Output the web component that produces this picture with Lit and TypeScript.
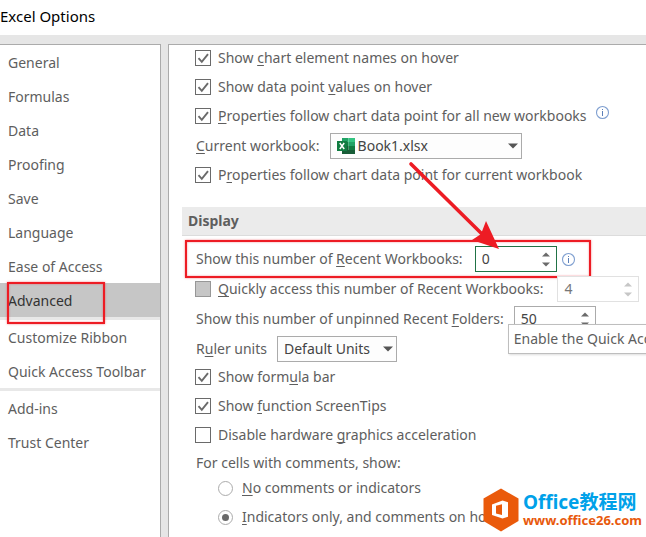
import { LitElement, html, css, svg, nothing, TemplateResult } from "lit";
import { customElement, property } from "lit/decorators.js";
import { classMap } from "lit/directives/class-map.js";

const NAV_GROUPS = [
  ["General", "Formulas", "Data", "Proofing", "Save", "Language", "Ease of Access", "Advanced"],
  ["Customize Ribbon", "Quick Access Toolbar"],
  ["Add-ins", "Trust Center"],
];

/** Renders a label whose access key is marked with "&", as in "&Current". */
function accessLabel(text: string): TemplateResult {
  const at = text.indexOf("&");
  if (at < 0) return html`${text}`;
  return html`${text.slice(0, at)}<u>${text[at + 1]}</u>${text.slice(at + 2)}`;
}

const infoIcon = html`<svg class="info" width="15" height="15" viewBox="0 0 15 15" aria-hidden="true">
  <circle cx="7.5" cy="7.5" r="6" fill="#fff" stroke="#7f9fd0" stroke-width="1.1" />
  <rect x="7" y="6" width="1" height="5" fill="#5b7fb8" />
  <rect x="7" y="4" width="1" height="1" fill="#5b7fb8" />
</svg>`;

const shared = css`
  *,
  *::before {
    box-sizing: border-box;
  }
  u {
    text-decoration-thickness: 1px;
    text-underline-offset: 2px;
    text-decoration-skip-ink: none;
  }
  input,
  select,
  button {
    font: inherit;
    color: inherit;
    margin: 0;
  }
`;

@customElement("option-check")
export class OptionCheck extends LitElement {
  @property() label = "";
  @property() kind: "checkbox" | "radio" = "checkbox";
  @property() name = "";
  @property({ type: Boolean }) checked = false;
  @property({ type: Boolean }) disabled = false;

  static styles = [
    shared,
    css`
      :host {
        display: block;
      }
      .row {
        display: flex;
        align-items: center;
        gap: 7px;
        height: 26px;
        white-space: nowrap;
      }
      .row.radio {
        gap: 9px;
      }
      .box {
        appearance: none;
        flex: none;
        display: grid;
        place-items: center;
        width: 16px;
        height: 16px;
        border: 1px solid #6a6a6a;
        background: #fff;
      }
      .mark {
        grid-area: 1 / 1;
        pointer-events: none;
      }
      .control {
        display: grid;
        place-items: center;
      }
      .control .box {
        grid-area: 1 / 1;
      }
      .box:disabled {
        background: #c6c6c6;
        border-color: #979797;
      }
      .radio .control {
        width: 15px;
        height: 15px;
      }
      .radio .box {
        width: 15px;
        height: 15px;
        border-color: #ababab;
        border-radius: 50%;
      }
    `,
  ];

  render() {
    const radio = this.kind === "radio";
    const mark = radio
      ? html`<svg class="mark" width="15" height="15" viewBox="0 0 15 15" aria-hidden="true">
          <circle cx="7.5" cy="7.5" r="3.5" fill="#6a6a6a" />
        </svg>`
      : html`<svg class="mark" width="16" height="16" viewBox="0 0 16 16" aria-hidden="true">
          <path d="M3.5 8.2 L6.8 11.8 L13 4.2" fill="none" stroke="#6a6a6a" stroke-width="1.9" />
        </svg>`;
    return html`<label class=${classMap({ row: true, radio })}>
      <span class="control">
        <input class="box" type=${this.kind} name=${this.name || nothing} .checked=${this.checked} ?disabled=${this.disabled} />
        ${this.checked ? mark : nothing}
      </span>
      <span>${accessLabel(this.label)}</span>
    </label>`;
  }
}

@customElement("number-spinner")
export class NumberSpinner extends LitElement {
  @property() label = "";
  @property({ type: Number }) value = 0;
  @property({ type: Boolean }) active = false;
  @property({ type: Boolean }) disabled = false;

  static styles = [
    shared,
    css`
      :host {
        display: block;
        flex: none;
      }
      .spin {
        display: flex;
        width: 82px;
        height: 26px;
        border: 1px solid #ababab;
        background: #fff;
        color: #444;
      }
      .spin.active {
        border-color: #217346;
      }
      .spin.disabled {
        border-color: #e1e1e1;
        color: #777;
      }
      .value {
        appearance: textfield;
        flex: 1;
        min-width: 0;
        padding: 0 0 0 6px;
        border: 0;
        outline: 0;
        background: none;
      }
      .value::-webkit-inner-spin-button {
        appearance: none;
      }
      .steps {
        display: flex;
        flex-direction: column;
        justify-content: center;
        gap: 5px;
        width: 14px;
      }
      .step {
        display: block;
        width: 8px;
        height: 5px;
        padding: 0;
        border: 0;
        background: none;
        line-height: 0;
        color: #6a6a6a;
      }
      .disabled .step {
        color: #c6c6c6;
      }
    `,
  ];

  render() {
    return html`<div class=${classMap({ spin: true, active: this.active, disabled: this.disabled })}>
      <input class="value" type="number" aria-label=${this.label} .value=${String(this.value)} ?disabled=${this.disabled} />
      <span class="steps">
        <button class="step" aria-label="Increase" ?disabled=${this.disabled}>
          <svg width="8" height="5" viewBox="0 0 8 5"><path d="M4 0.5 L8 4.5 H0 Z" fill="currentColor" /></svg>
        </button>
        <button class="step" aria-label="Decrease" ?disabled=${this.disabled}>
          <svg width="8" height="5" viewBox="0 0 8 5"><path d="M4 4.5 L8 0.5 H0 Z" fill="currentColor" /></svg>
        </button>
      </span>
    </div>`;
  }
}

@customElement("app-root")
export class AppRoot extends LitElement {
  static styles = [
    shared,
    css`
      :host {
        display: flex;
        flex-direction: column;
        position: relative;
        min-height: 100vh;
        overflow: hidden;
        background: #e6e6e6;
        color: #5e5e5e;
        font: 14px/20px "Noto Sans", "Open Sans", "Noto Sans CJK SC", sans-serif;
        box-sizing: border-box;
      }
      .title {
        margin: 0;
        height: 35px;
        padding-top: 6px;
        background: #fff;
        color: #000;
        font-size: 15px;
        font-weight: 400;
      }
      .body {
        flex: 1;
        display: flex;
        gap: 7px;
        padding-top: 9px;
      }
      .nav {
        flex: none;
        width: 161px;
        border: solid #ababab;
        border-width: 1px 1px 0 0;
        background: #fff;
      }
      .group + .group {
        border-top: 3px solid #fff;
        border-image: linear-gradient(to right, #e8e8e8 157px, #fff 157px) 3;
      }
      .item {
        display: flex;
        align-items: center;
        position: relative;
        height: 34px;
        padding: 1px 0 0 8px;
        color: inherit;
        text-decoration: none;
        white-space: nowrap;
      }
      .item.current {
        background: #c6c6c6;
        color: #333;
      }
      .frame {
        position: absolute;
        border: 2px solid #ed1c24;
        box-shadow: 0 0 2px #ed1c2488, inset 0 0 2px #ed1c2488;
        pointer-events: none;
      }
      .item .frame {
        left: 7px;
        top: -1px;
        width: 98px;
        height: 42px;
        z-index: 1;
      }
      .page {
        flex: 1;
        min-width: 0;
        padding-left: 13px;
        border: solid #ababab;
        border-width: 1px 0 0 1px;
        background: #fff;
      }
      .stack {
        display: flex;
        flex-direction: column;
        gap: 3px;
        padding-left: 13px;
      }
      .fields {
        gap: 4px;
        margin-top: 10px;
      }
      .checks {
        margin-top: 2px;
      }
      .field {
        display: flex;
        align-items: center;
        gap: 10px;
        position: relative;
        height: 26px;
        padding-left: 1px;
        white-space: nowrap;
      }
      .field.recent {
        gap: 12px;
      }
      .field.quick {
        gap: 14px;
        padding-left: 0;
      }
      .chart .field {
        margin-top: 1px;
      }
      .with-info {
        display: flex;
        align-items: flex-start;
        gap: 8px;
      }
      .heading {
        height: 29px;
        margin: 19px 0 0;
        padding: 4px 6px;
        border-bottom: 1px solid #dcdcdc;
        background: #ebebeb;
        font-size: 14px;
        line-height: 20px;
        font-weight: 700;
      }
      .info {
        display: block;
        flex: none;
      }
      .with-info .info {
        margin-top: 2px;
      }
      .spin-info {
        display: flex;
        align-items: center;
        gap: 4px;
      }
      .picker {
        display: grid;
        align-items: center;
      }
      .picker > * {
        grid-area: 1 / 1;
      }
      .select {
        appearance: none;
        height: 26px;
        padding: 0 20px 0 6px;
        border: 1px solid #ababab;
        border-radius: 0;
        background: #fdfdfd;
        color: #444;
      }
      .book {
        width: 192px;
        padding-left: 27px;
      }
      .units {
        width: 120px;
      }
      .arrow-down {
        justify-self: end;
        margin-right: 4px;
        pointer-events: none;
      }
      .excel {
        margin-left: 7px;
        pointer-events: none;
      }
      .target {
        position: relative;
      }
      .pointer {
        position: absolute;
        right: 58px;
        bottom: 22px;
        z-index: 2;
        pointer-events: none;
      }
      .field .frame {
        left: -10px;
        top: -6px;
        width: 406px;
        height: 38px;
      }
      .tip {
        position: absolute;
        left: -6px;
        top: 18px;
        height: 30px;
        padding: 4px 5px;
        border: 1px solid #bebebe;
        background: #fff;
        box-shadow: 1px 1px 2px #0002;
        z-index: 1;
      }
      .caption {
        margin: 0;
        height: 21px;
        padding-left: 1px;
        line-height: 24px;
      }
      .radios {
        padding-left: 23px;
        display: flex;
        flex-direction: column;
        gap: 3px;
      }
      .brand {
        display: flex;
        align-items: center;
        gap: 4px;
        position: absolute;
        right: 4px;
        bottom: 5px;
        text-decoration: none;
        white-space: nowrap;
        font-weight: 700;
      }
      .words {
        display: flex;
        flex-direction: column;
      }
      .name {
        color: #00a1e9;
        font-size: 19px;
        line-height: 20px;
      }
      .site {
        color: #e8590c;
        font-size: 13px;
        line-height: 16px;
      }
    `,
  ];

  private caret = html`<svg class="arrow-down" width="10" height="6" viewBox="0 0 10 6" aria-hidden="true">
    <path d="M0 0.5 H10 L5 5.5 Z" fill="#555" />
  </svg>`;

  private nav() {
    return html`<nav class="nav">
      ${NAV_GROUPS.map(
        (group) => html`<div class="group">
          ${group.map((name) => {
            const current = name === "Advanced";
            return html`<a class=${classMap({ item: true, current })} href="#" aria-current=${current ? "page" : nothing}
              >${name}${current ? html`<span class="frame"></span>` : nothing}</a
            >`;
          })}
        </div>`
      )}
    </nav>`;
  }

  private chartOptions() {
    return html`<div class="stack chart">
      <option-check checked label="Show &chart element names on hover"></option-check>
      <option-check checked label="Show data point &values on hover"></option-check>
      <div class="with-info">
        <option-check checked label="&Properties follow chart data point for all new workbooks"></option-check>
        ${infoIcon}
      </div>
      <div class="field">
        <label for="book">${accessLabel("&Current workbook:")}</label>
        <span class="picker">
          <select class="select book" id="book"><option>Book1.xlsx</option></select>
          <svg class="excel" width="18" height="16" viewBox="0 0 18 16" aria-hidden="true">
            <rect x="5" y="0" width="6.5" height="4" fill="#21a366" />
            <rect x="11.5" y="0" width="6.5" height="4" fill="#33c481" />
            <rect x="5" y="4" width="6.5" height="4" fill="#107c41" />
            <rect x="11.5" y="4" width="6.5" height="4" fill="#21a366" />
            <rect x="5" y="8" width="6.5" height="4" fill="#185c37" />
            <rect x="11.5" y="8" width="6.5" height="4" fill="#107c41" />
            <rect x="5" y="12" width="13" height="4" fill="#185c37" />
            <rect x="0" y="3" width="10" height="10" fill="#107c41" />
            <path d="M2.8 5 L7.2 11 M7.2 5 L2.8 11" stroke="#fff" stroke-width="1.5" />
          </svg>
          ${this.caret}
        </span>
      </div>
      <option-check checked label="P&roperties follow chart data point for current workbook"></option-check>
    </div>`;
  }

  private displayOptions() {
    return html`<div class="stack fields">
        <div class="field recent">
          <span class="frame"></span>
          <span>${accessLabel("Show this number of &Recent Workbooks:")}</span>
          <span class="spin-info">
            <span class="target">
              <number-spinner active label="Recent Workbooks" .value=${0}></number-spinner>
              <svg class="pointer" width="92" height="92" viewBox="0 0 92 92" aria-hidden="true">
                <path d="M4 6 L76 77" stroke="#ed1c24" stroke-width="3.6" stroke-linecap="round" />
                <path d="M92 91 L65 82 L74 76 L79 63 Z" fill="#ed1c24" />
              </svg>
            </span>
            ${infoIcon}
          </span>
        </div>
        <div class="field quick">
          <option-check disabled label="&Quickly access this number of Recent Workbooks:"></option-check>
          <number-spinner disabled label="Quick access workbooks" .value=${4}></number-spinner>
        </div>
        <div class="field">
          <span>${accessLabel("Show this number of unpinned Recent &Folders:")}</span>
          <span class="target">
            <number-spinner label="Unpinned Recent Folders" .value=${50}></number-spinner>
            <span class="tip" role="tooltip">Enable the Quick Access Toolbar</span>
          </span>
        </div>
        <div class="field">
          <label for="units">${accessLabel("R&uler units")}</label>
          <span class="picker">
            <select class="select units" id="units"><option>Default Units</option></select>
            ${this.caret}
          </span>
        </div>
      </div>
      <div class="stack checks">
        <option-check checked label="Show form&ula bar"></option-check>
        <option-check checked label="Show &function ScreenTips"></option-check>
        <option-check label="Disable hardware &graphics acceleration"></option-check>
        <p class="caption">For cells with comments, show:</p>
        <div class="radios" role="radiogroup" aria-label="For cells with comments, show">
          <option-check kind="radio" name="comments" label="&No comments or indicators"></option-check>
          <option-check kind="radio" name="comments" checked label="&Indicators only, and comments on hover"></option-check>
        </div>
      </div>`;
  }

  render() {
    return html`<h1 class="title">Excel Options</h1>
      <div class="body">
        ${this.nav()}
        <main class="page">
          ${this.chartOptions()}
          <h2 class="heading">Display</h2>
          ${this.displayOptions()}
        </main>
      </div>
      <a class="brand" href="#">
        <svg width="36" height="44" viewBox="0 0 36 44" aria-hidden="true">
          <path d="M18 0.5 L35.5 10.5 V33 L18 43.5 L0.5 33 V10.5 Z" fill="#ea5a0b" />
          <path
            d="M9 16.5 L19.5 12.5 L25 14.2 V28.8 L19.5 30.5 L9 27 Z M13 17.8 V25.6 L19 27 V16.3 Z"
            fill="#fff"
            fill-rule="evenodd"
          />
        </svg>
        <span class="words">
          <span class="name">Office教程网</span>
          <span class="site">www.office26.com</span>
        </span>
      </a>`;
  }
}
